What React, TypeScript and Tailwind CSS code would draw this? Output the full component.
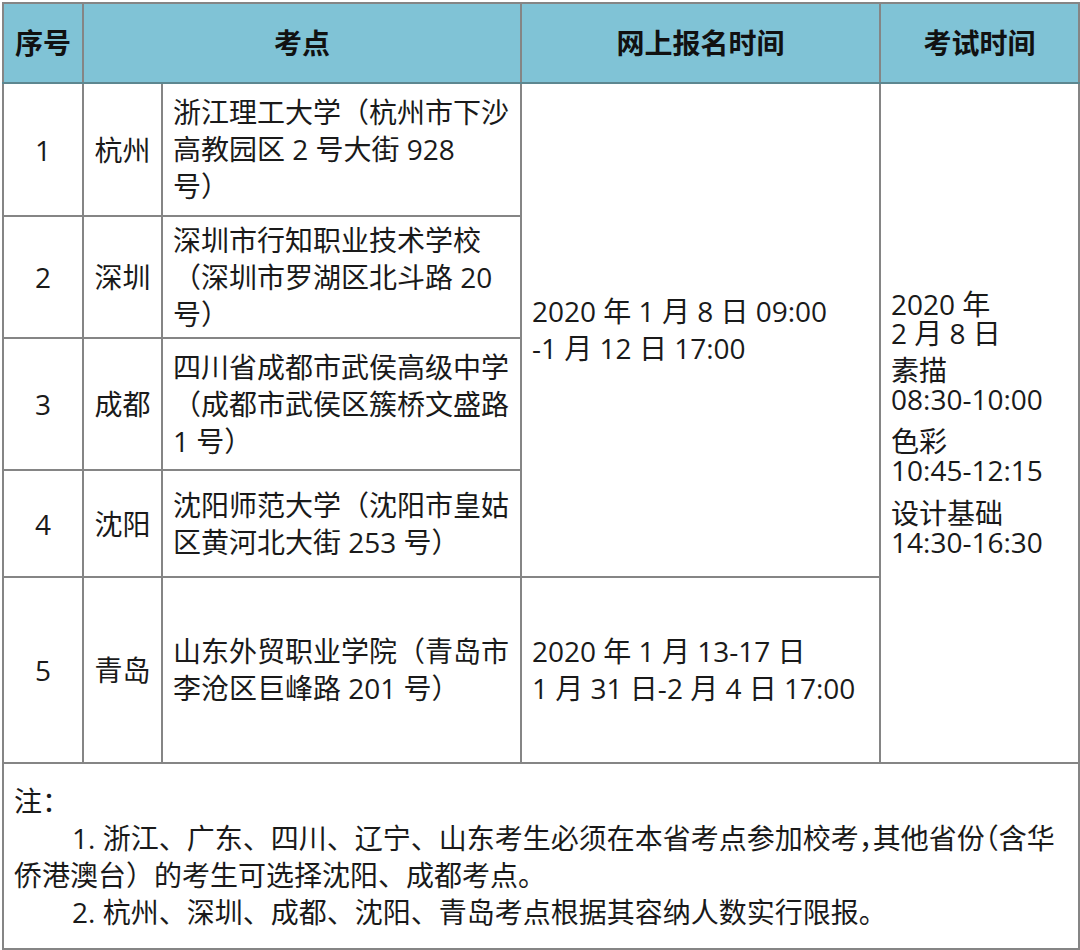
const rows = [
  { no: "1", city: "杭州", lines: ["浙江理工大学（杭州市下沙", "高教园区 2 号大街 928", "号）"], h: "h-[133px]" },
  { no: "2", city: "深圳", lines: ["深圳市行知职业技术学校", "（深圳市罗湖区北斗路 20", "号）"], h: "h-[122px]" },
  { no: "3", city: "成都", lines: ["四川省成都市武侯高级中学", "（成都市武侯区簇桥文盛路", "1 号）"], h: "h-[132px]" },
  { no: "4", city: "沈阳", lines: ["沈阳师范大学（沈阳市皇姑", "区黄河北大街 253 号）"], h: "h-[107px]" },
]

const cell = "border-2 border-[#858585]"

function ExamTime() {
  return (
    <div className="leading-[29px] whitespace-nowrap">
      <div>2020 年</div>
      <div>2 月 8 日</div>
      <div className="mt-[8px]">素描</div>
      <div>08:30-10:00</div>
      <div className="mt-[13px]">色彩</div>
      <div>10:45-12:15</div>
      <div className="mt-[14px]">设计基础</div>
      <div>14:30-16:30</div>
    </div>
  )
}

export default function App() {
  return (
    <div
      className="bg-white w-[1080px] h-[950px] pt-[2px] pl-[2px] text-[#1a1a1a] text-[28px]"
      style={{ fontFamily: '"Open Sans", "Noto Sans CJK SC", sans-serif' }}
    >
      <table className="table-fixed border-collapse w-[1076px]">
        <colgroup>
          <col className="w-[80px]" />
          <col className="w-[79px]" />
          <col className="w-[359px]" />
          <col className="w-[359px]" />
          <col className="w-[199px]" />
        </colgroup>
        <thead>
          <tr className="h-[80px] bg-[#80c3d6]">
            <th className={`${cell} border-b-[#5d8790] font-bold text-[#111]`}>序号</th>
            <th colSpan={2} className={`${cell} border-b-[#5d8790] font-bold text-[#111]`}>考点</th>
            <th className={`${cell} border-b-[#5d8790] font-bold text-[#111]`}>网上报名时间</th>
            <th className={`${cell} border-b-[#5d8790] font-bold text-[#111]`}>考试时间</th>
          </tr>
        </thead>
        <tbody>
          {rows.map((r, i) => (
            <tr key={r.no} className={r.h}>
              <td className={`${cell} text-center`}>{r.no}</td>
              <td className={`${cell} text-center`}>{r.city}</td>
              <td className={`${cell} pl-[10px] leading-[37px] whitespace-nowrap`}>
                {r.lines.map((l) => (
                  <div key={l}>{l}</div>
                ))}
              </td>
              {i === 0 && (
                <>
                  <td rowSpan={4} className={`${cell} pl-[10px] leading-[37px] whitespace-nowrap`}>
                    <div>2020 年 1 月 8 日 09:00</div>
                    <div>-1 月 12 日 17:00</div>
                  </td>
                  <td rowSpan={5} className={`${cell} pl-[10px]`}>
                    <ExamTime />
                  </td>
                </>
              )}
            </tr>
          ))}
          <tr className="h-[186px]">
            <td className={`${cell} text-center`}>5</td>
            <td className={`${cell} text-center`}>青岛</td>
            <td className={`${cell} pl-[10px] leading-[37px] whitespace-nowrap`}>
              <div>山东外贸职业学院（青岛市</div>
              <div>李沧区巨峰路 201 号）</div>
            </td>
            <td className={`${cell} pl-[10px] leading-[37px] whitespace-nowrap`}>
              <div>2020 年 1 月 13-17 日</div>
              <div>1 月 31 日-2 月 4 日 17:00</div>
            </td>
          </tr>
          <tr className="h-[186px]">
            <td colSpan={5} className={`${cell} align-top pt-[19px] pl-[10px] leading-[37px] whitespace-nowrap`}>
              <div>注：</div>
              <div className="pl-[58px]">
                1. 浙江、广东、四川、辽宁、山东考生必须在本省考点参加校考
                <span className="[font-feature-settings:'halt']">，</span>其他省份
                <span className="[font-feature-settings:'halt']">（</span>含华
              </div>
              <div>侨港澳台）的考生可选择沈阳、成都考点。</div>
              <div className="pl-[58px]">2. 杭州、深圳、成都、沈阳、青岛考点根据其容纳人数实行限报。</div>
            </td>
          </tr>
        </tbody>
      </table>
    </div>
  )
}
